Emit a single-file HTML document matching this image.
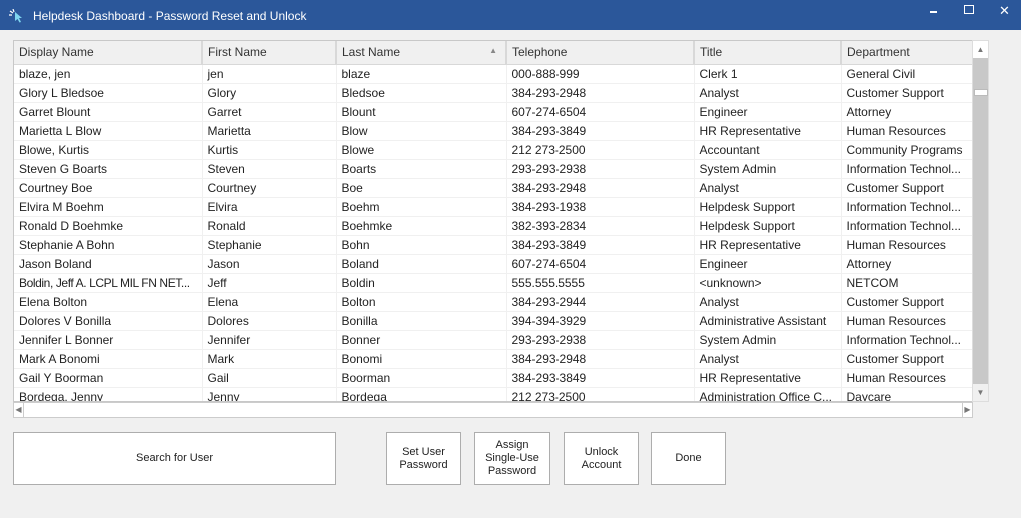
<!DOCTYPE html>
<html><head><meta charset="utf-8"><style>
*{margin:0;padding:0;box-sizing:border-box}
body{width:1021px;height:518px;background:#f0f0f0;font-family:"Liberation Sans",sans-serif;font-size:12px;color:#222;position:relative;overflow:hidden}
.tb{position:absolute;left:0;top:0;width:1021px;height:30px;background:#2b579a;color:#fff}
.tb .t{position:absolute;left:33px;top:9px;font-size:12px}
.grid{position:absolute;left:13px;top:40px;width:960px;height:362px;background:#fff;border:1px solid #c8c8c8;overflow:hidden}
table{border-collapse:collapse;table-layout:fixed;position:absolute;left:0;top:0;width:960px}
td,th{height:19px;padding:0 5px;white-space:nowrap;overflow:hidden;text-overflow:ellipsis;text-align:left;font-weight:normal;border-right:1px solid #f0f0f0;border-bottom:1px solid #f0f0f0}
th{height:23px;background:#f0f0f0;border-right:2px solid #d8d8d8;border-bottom:1px solid #d8d8d8;color:#333}
.vs{position:absolute;left:972px;top:40px;width:17px;height:362px;background:#c8c8c8;border:1px solid #ddd}
.vs .a{position:absolute;left:0;width:15px;height:17px;background:#fff;font-size:8px;color:#777;text-align:center;line-height:17px}
.hs{position:absolute;left:13px;top:402px;width:960px;height:16px;background:#fff;border:1px solid #ccc}
.hs .a{position:absolute;top:0;width:10px;height:14px;background:#fff;border-right:1px solid #ccc;font-size:8px;color:#777;text-align:center;line-height:14px}
.btn{position:absolute;top:432px;height:53px;background:#fff;border:1px solid #adadad;display:flex;align-items:center;justify-content:center;text-align:center;font-size:11px;line-height:13px;color:#222}
</style></head><body>
<div class="tb"><svg style="position:absolute;left:9px;top:9px" width="16" height="14" viewBox="0 0 16 14"><path d="M6 3 L13 9 L10 9 L12 13 L10.5 13.5 L8.5 10 L6 12 Z" fill="#7fd6f0"/><path d="M1 2 L4 4 M0 6 L3 6 M4 0 L5 3" stroke="#fff" stroke-width="1.2"/></svg><span class="t">Helpdesk Dashboard - Password Reset and Unlock</span>
<div style="position:absolute;left:930px;top:11px;width:7px;height:2px;background:#fff"></div>
<div style="position:absolute;left:964px;top:5px;width:10px;height:9px;border:1.5px solid #fff"></div>
<div style="position:absolute;left:999px;top:3px;font-size:13px">✕</div>
</div>
<div class="grid"><table>
<colgroup><col style="width:188px"><col style="width:134px"><col style="width:170px"><col style="width:188px"><col style="width:147px"><col style="width:133px"></colgroup>
<tr><th>Display Name</th><th>First Name</th><th style="position:relative">Last Name<span style="position:absolute;right:8px;top:5px;font-size:8px;color:#888">▲</span></th><th>Telephone</th><th>Title</th><th>Department</th></tr>
<tr><td>blaze, jen</td><td>jen</td><td>blaze</td><td>000-888-999</td><td>Clerk 1</td><td>General Civil</td></tr>
<tr><td>Glory L Bledsoe</td><td>Glory</td><td>Bledsoe</td><td>384-293-2948</td><td>Analyst</td><td>Customer Support</td></tr>
<tr><td>Garret Blount</td><td>Garret</td><td>Blount</td><td>607-274-6504</td><td>Engineer</td><td>Attorney</td></tr>
<tr><td>Marietta L Blow</td><td>Marietta</td><td>Blow</td><td>384-293-3849</td><td>HR Representative</td><td>Human Resources</td></tr>
<tr><td>Blowe, Kurtis</td><td>Kurtis</td><td>Blowe</td><td>212 273-2500</td><td>Accountant</td><td>Community Programs</td></tr>
<tr><td>Steven G Boarts</td><td>Steven</td><td>Boarts</td><td>293-293-2938</td><td>System Admin</td><td>Information Technol...</td></tr>
<tr><td>Courtney Boe</td><td>Courtney</td><td>Boe</td><td>384-293-2948</td><td>Analyst</td><td>Customer Support</td></tr>
<tr><td>Elvira M Boehm</td><td>Elvira</td><td>Boehm</td><td>384-293-1938</td><td>Helpdesk Support</td><td>Information Technol...</td></tr>
<tr><td>Ronald D Boehmke</td><td>Ronald</td><td>Boehmke</td><td>382-393-2834</td><td>Helpdesk Support</td><td>Information Technol...</td></tr>
<tr><td>Stephanie A Bohn</td><td>Stephanie</td><td>Bohn</td><td>384-293-3849</td><td>HR Representative</td><td>Human Resources</td></tr>
<tr><td>Jason Boland</td><td>Jason</td><td>Boland</td><td>607-274-6504</td><td>Engineer</td><td>Attorney</td></tr>
<tr><td style="letter-spacing:-0.4px;text-overflow:clip">Boldin, Jeff A. LCPL MIL FN NET...</td><td>Jeff</td><td>Boldin</td><td>555.555.5555</td><td>&lt;unknown&gt;</td><td>NETCOM</td></tr>
<tr><td>Elena Bolton</td><td>Elena</td><td>Bolton</td><td>384-293-2944</td><td>Analyst</td><td>Customer Support</td></tr>
<tr><td>Dolores V Bonilla</td><td>Dolores</td><td>Bonilla</td><td>394-394-3929</td><td>Administrative Assistant</td><td>Human Resources</td></tr>
<tr><td>Jennifer L Bonner</td><td>Jennifer</td><td>Bonner</td><td>293-293-2938</td><td>System Admin</td><td>Information Technol...</td></tr>
<tr><td>Mark A Bonomi</td><td>Mark</td><td>Bonomi</td><td>384-293-2948</td><td>Analyst</td><td>Customer Support</td></tr>
<tr><td>Gail Y Boorman</td><td>Gail</td><td>Boorman</td><td>384-293-3849</td><td>HR Representative</td><td>Human Resources</td></tr>
<tr><td>Bordega, Jenny</td><td>Jenny</td><td>Bordega</td><td>212 273-2500</td><td>Administration Office C...</td><td>Daycare</td></tr>
</table></div>
<div class="vs"><div class="a" style="top:0">▲</div><div style="position:absolute;left:1px;top:48px;width:14px;height:7px;background:#fff;border:1px solid #bbb"></div><div class="a" style="top:343px;background:#f0f0f0">▼</div></div>
<div class="hs"><div class="a" style="left:0">◀</div><div class="a" style="right:0;border-left:1px solid #ccc;border-right:none">▶</div></div>
<div class="btn" style="left:13px;width:323px">Search for User</div>
<div class="btn" style="left:386px;width:75px">Set User<br>Password</div>
<div class="btn" style="left:474px;width:76px">Assign<br>Single-Use<br>Password</div>
<div class="btn" style="left:564px;width:75px">Unlock<br>Account</div>
<div class="btn" style="left:651px;width:75px">Done</div>
</body></html>
